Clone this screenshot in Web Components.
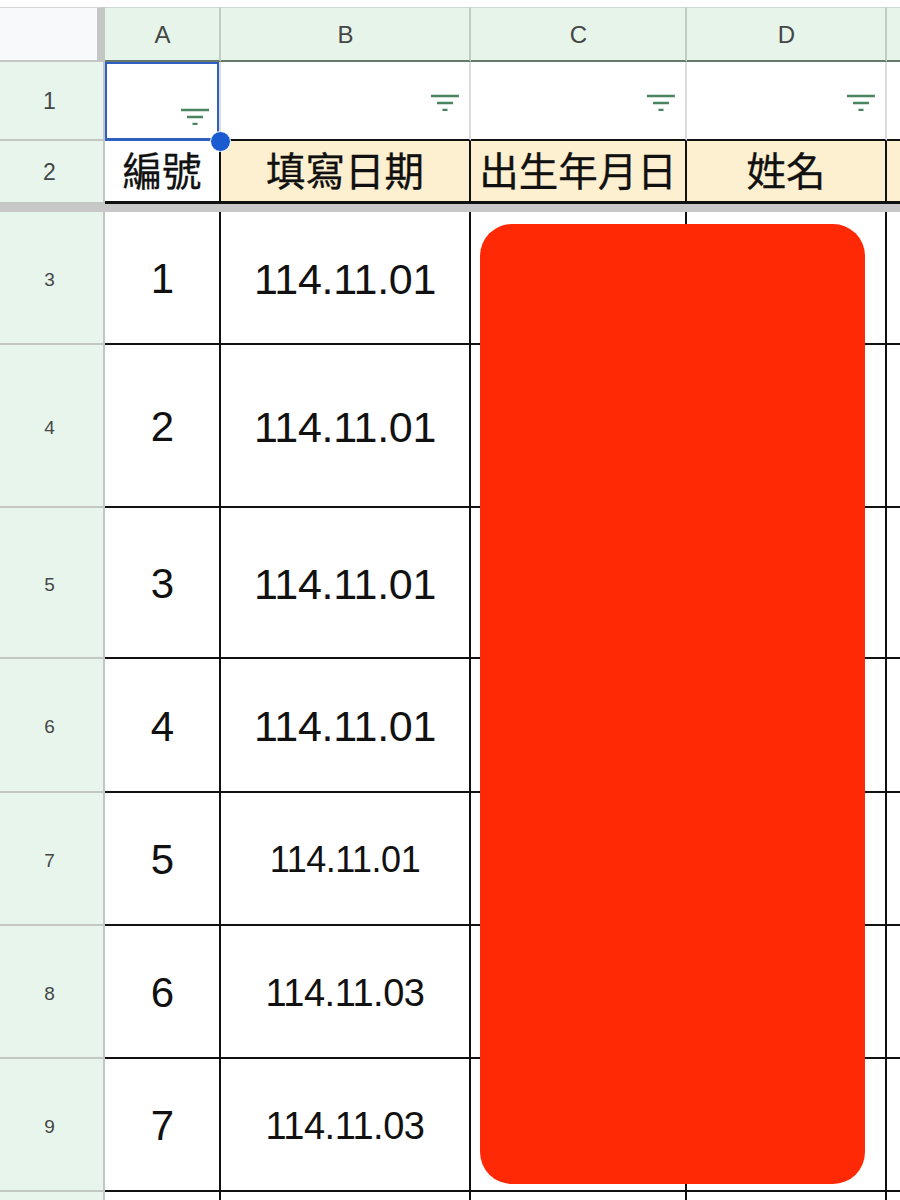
<!DOCTYPE html>
<html lang="zh-Hant">
<head>
<meta charset="utf-8">
<title>Sheet</title>
<style>
  html, body { margin: 0; background: #fff; }
</style>
</head>
<body>
<sheet-grid>
  <corner-cell></corner-cell>
  <col-head>A</col-head><col-head>B</col-head><col-head>C</col-head><col-head>D</col-head><col-head></col-head>

  <row-head big>1</row-head>
  <filter-cell low></filter-cell><filter-cell></filter-cell><filter-cell></filter-cell><filter-cell></filter-cell><filter-cell empty></filter-cell>

  <row-head big>2</row-head>
  <title-cell plain>編號</title-cell><title-cell>填寫日期</title-cell><title-cell>出生年月日</title-cell><title-cell>姓名</title-cell><title-cell></title-cell>

  <frozen-bar></frozen-bar>

  <row-head>3</row-head>
  <data-cell>1</data-cell><data-cell size="large">114.11.01</data-cell><data-cell></data-cell><data-cell></data-cell><data-cell></data-cell>
  <row-head>4</row-head>
  <data-cell>2</data-cell><data-cell size="large">114.11.01</data-cell><data-cell></data-cell><data-cell></data-cell><data-cell></data-cell>
  <row-head>5</row-head>
  <data-cell>3</data-cell><data-cell size="large">114.11.01</data-cell><data-cell></data-cell><data-cell></data-cell><data-cell></data-cell>
  <row-head>6</row-head>
  <data-cell>4</data-cell><data-cell size="large">114.11.01</data-cell><data-cell></data-cell><data-cell></data-cell><data-cell></data-cell>
  <row-head>7</row-head>
  <data-cell>5</data-cell><data-cell size="small">114.11.01</data-cell><data-cell></data-cell><data-cell></data-cell><data-cell></data-cell>
  <row-head>8</row-head>
  <data-cell>6</data-cell><data-cell size="medium">114.11.03</data-cell><data-cell></data-cell><data-cell></data-cell><data-cell></data-cell>
  <row-head>9</row-head>
  <data-cell>7</data-cell><data-cell size="medium">114.11.03</data-cell><data-cell></data-cell><data-cell></data-cell><data-cell></data-cell>
  <row-head></row-head>
  <data-cell></data-cell><data-cell></data-cell><data-cell></data-cell><data-cell></data-cell><data-cell></data-cell>

  <cell-selection slot="overlay"></cell-selection>
  <redact-box slot="overlay"></redact-box>
</sheet-grid>

<script>
// small helper so every element below stays a one-liner
function define(name, css, html = '<slot></slot>') {
  customElements.define(name, class extends HTMLElement {
    constructor() {
      super();
      this.attachShadow({ mode: 'open' });
      this.shadowRoot.innerHTML = `<style>${css}</style>${html}`;
    }
  });
}

const centered = 'display: flex; align-items: center; justify-content: center; box-sizing: border-box; min-width: 0; min-height: 0;';
const latin = '"Liberation Sans", Arial, sans-serif';
const cjk = '"Liberation Sans", "Noto Sans CJK TC", sans-serif';

define('sheet-grid', `
  :host { display: block; position: relative; width: 900px; height: 1200px; overflow: hidden; background: #fff; }
  .grid {
    display: grid;
    padding-top: 7px;
    box-sizing: border-box;
    /* columns and rows run on past the window, like a scrolled sheet */
    grid-template-columns: 105px 116px 250px 216px 200px 100px;
    grid-template-rows: 55px 79px 63px 8px 133px 163px 151px 134px 133px 133px 133px 100px;
  }
`, `<div class="grid"><slot></slot></div><slot name="overlay"></slot>`);

define('corner-cell', `
  :host { display: block; box-sizing: border-box; background: #f8f9fa; border-top: 1px solid #d5d8d6; border-right: 8px solid #c4c6c5; border-bottom: 2px solid #c4c6c5; }
`);

define('col-head', `
  :host { ${centered} background: #e6f4ea; color: #444746; font: 24px ${latin}; border-top: 1px solid #d0d8d2; border-right: 2px solid #bfcbc3; border-bottom: 2px solid #66776c; padding: 1px 0 0 1px; }
`);

define('row-head', `
  :host { ${centered} background: #e7f5ec; color: #444746; font: 19px ${latin}; border-right: 2px solid #c4c6c5; border-bottom: 2px solid #c4c8c4; padding: 4px 4px 0 0; }
  :host([big]) { font-size: 23px; padding: 2px 4px 0 0; }
`);

define('filter-cell', `
  :host { display: flex; justify-content: flex-end; align-items: flex-start; box-sizing: border-box; padding: 31px 10px 0 0; background: #fff; border-right: 2px solid #dadce0; border-bottom: 2px solid #111; }
  :host([low]) { padding-top: 45px; }
  :host([empty]) svg { display: none; }
  svg { display: block; width: 28px; height: 18px; }
`, `<svg viewBox="0 0 28 18" fill="none" stroke="#4a8560" stroke-width="2.4"><path d="M0 3H28M6 10H22M11.5 17H16.5"/></svg>`);

define('title-cell', `
  :host { ${centered} background: #fdf0d0; color: #111; font: 400 39.5px/1 ${cjk}; -webkit-text-stroke: 0.3px #111; white-space: nowrap; border-right: 2px solid #111; border-bottom: 3px solid #111; padding-top: 4px; }
  :host([plain]) { background: #fff; }
`);

define('frozen-bar', `
  :host { display: block; grid-column: 1 / -1; background: #c8c8c8; }
`);

define('data-cell', `
  :host { ${centered} background: #fff; color: #111; font: 42px ${latin}; white-space: nowrap; border-right: 2px solid #111; border-bottom: 2px solid #111; padding: 3px 0 0 1px; }
  :host([size="large"]) { font-size: 43px; letter-spacing: -0.3px; padding-left: 0; }
  :host([size="small"]) { font-size: 36px; letter-spacing: -0.5px; padding-left: 0; }
  :host([size="medium"]) { font-size: 38px; letter-spacing: -0.5px; padding-left: 0; }
`);

define('cell-selection', `
  :host { position: absolute; left: 105px; top: 62px; width: 114px; height: 79px; box-sizing: border-box; border: 2px solid #2f5fbf; border-bottom-width: 3px; }
  .dot { position: absolute; right: -14px; bottom: -14px; width: 19px; height: 19px; border-radius: 50%; background: #1a5cd0; border: 1px solid #fff; }
`, `<div class="dot"></div>`);

define('redact-box', `
  :host { position: absolute; left: 480px; top: 224px; width: 385px; height: 960px; border-radius: 32px; background: #ff2a05; }
`);
</script>
</body>
</html>
